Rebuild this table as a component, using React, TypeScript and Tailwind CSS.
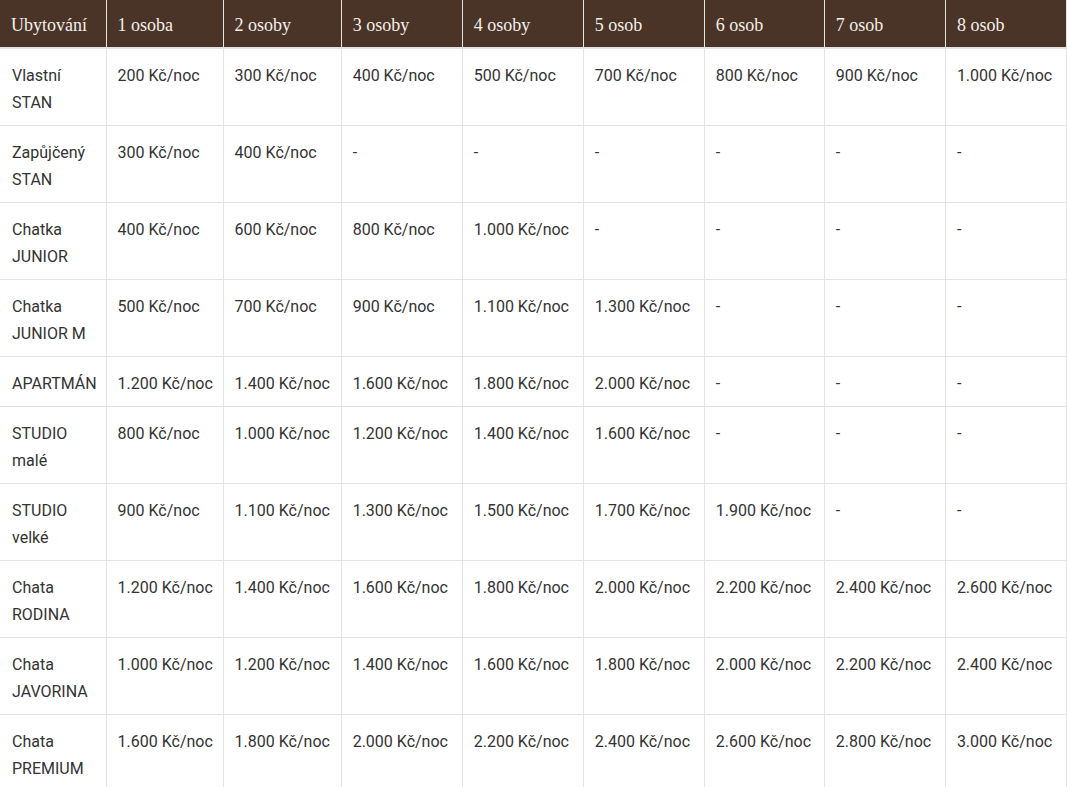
const HEADERS = ['Ubytování', '1 osoba', '2 osoby', '3 osoby', '4 osoby', '5 osob', '6 osob', '7 osob', '8 osob'];

const COL_WIDTHS = ['w-[106px]', 'w-[117px]', 'w-[118px]', 'w-[121px]', 'w-[121px]', 'w-[121px]', 'w-[120px]', 'w-[121px]', 'w-[121px]'];

const ROWS: [string, string | null, string[]][] = [
  ['Vlastní', 'STAN', ['200', '300', '400', '500', '700', '800', '900', '1.000']],
  ['Zapůjčený', 'STAN', ['300', '400', '', '', '', '', '', '']],
  ['Chatka', 'JUNIOR', ['400', '600', '800', '1.000', '', '', '', '']],
  ['Chatka', 'JUNIOR M', ['500', '700', '900', '1.100', '1.300', '', '', '']],
  ['APARTMÁN', null, ['1.200', '1.400', '1.600', '1.800', '2.000', '', '', '']],
  ['STUDIO', 'malé', ['800', '1.000', '1.200', '1.400', '1.600', '', '', '']],
  ['STUDIO', 'velké', ['900', '1.100', '1.300', '1.500', '1.700', '1.900', '', '']],
  ['Chata', 'RODINA', ['1.200', '1.400', '1.600', '1.800', '2.000', '2.200', '2.400', '2.600']],
  ['Chata', 'JAVORINA', ['1.000', '1.200', '1.400', '1.600', '1.800', '2.000', '2.200', '2.400']],
  ['Chata', 'PREMIUM', ['1.600', '1.800', '2.000', '2.200', '2.400', '2.600', '2.800', '3.000']],
];

export default function App() {
  return (
    <div className="w-[1067px] bg-white">
      <table className="w-[1067px] table-fixed border-collapse text-left border-r border-[#e3e3e3]">
        <colgroup>
          {COL_WIDTHS.map((w, i) => (
            <col key={i} className={w} />
          ))}
        </colgroup>
        <thead>
          <tr className="bg-[#4a3428] border-b-2 border-[#e3e3e3]">
            {HEADERS.map((h, i) => (
              <th
                key={h}
                className={`px-[11px] pt-[12px] pb-[8px] align-top font-normal text-[18px] leading-[27px] text-[#f4efe9] font-['Liberation_Serif',serif] ${
                  i === 0 ? '' : 'border-l border-[#e8e4e0]'
                }`}
              >
                {h}
              </th>
            ))}
          </tr>
        </thead>
        <tbody className="font-['Roboto',sans-serif] text-[16px] leading-[27px] text-[#333333]">
          {ROWS.map(([a, b, prices], r) => (
            <tr key={r} className="border-b border-[#e3e3e3]">
              <td className="pl-[12px] pr-[8px] pt-[13px] pb-[9px] align-top">
                {a}
                {b && <br />}
                {b}
              </td>
              {prices.map((p, c) => (
                <td key={c} className="px-[11px] pt-[13px] pb-[9px] align-top border-l border-[#e3e3e3] whitespace-nowrap">
                  {p ? `${p} Kč/noc` : '-'}
                </td>
              ))}
            </tr>
          ))}
        </tbody>
      </table>
    </div>
  );
}
